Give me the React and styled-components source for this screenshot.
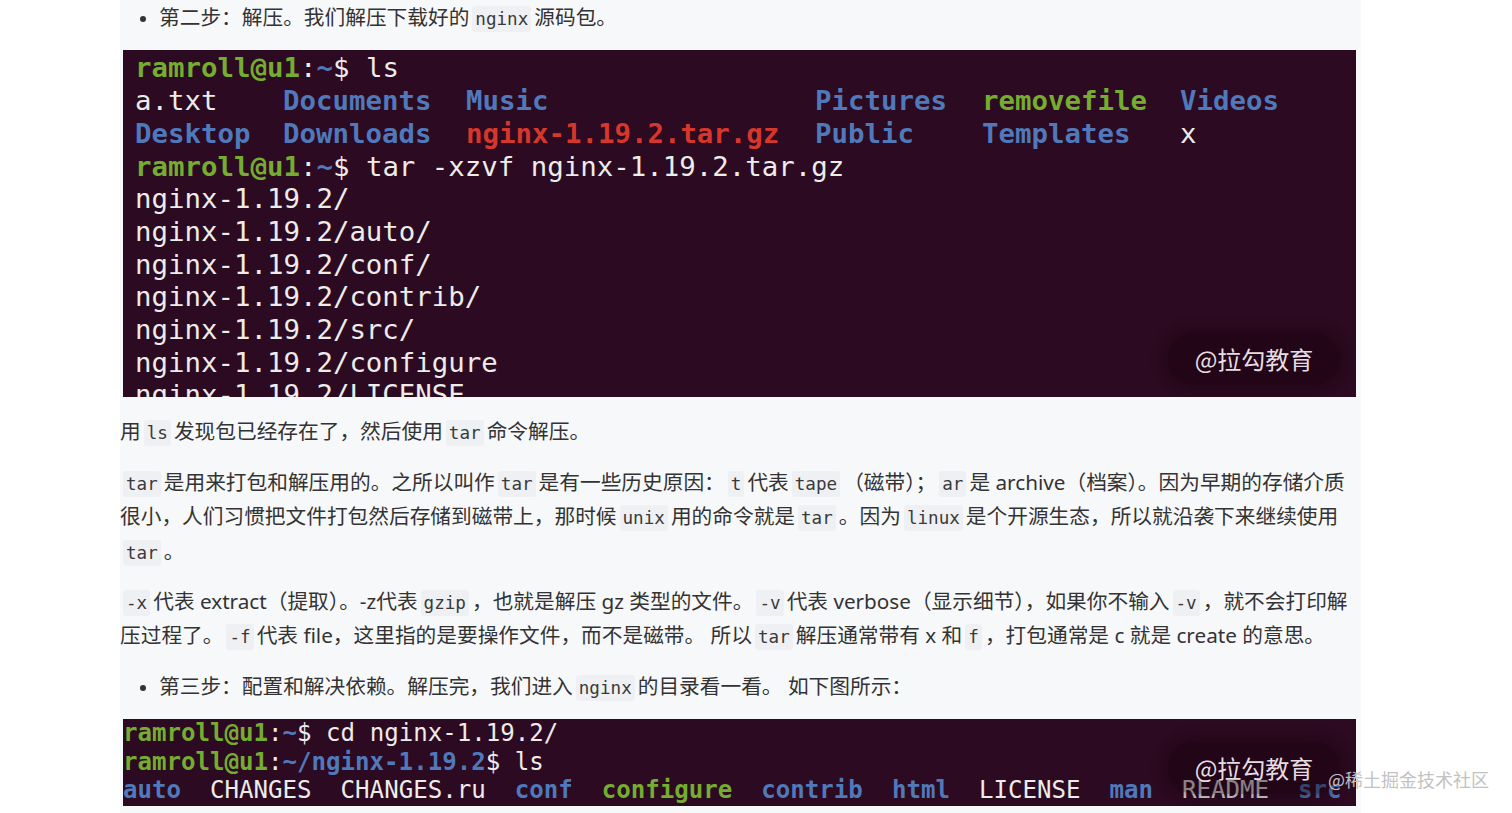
import React from "react";
import styled, { createGlobalStyle } from "styled-components";

const Global = createGlobalStyle`
  html, body { margin: 0; padding: 0; background: #ffffff; }
  body { font-family: "Noto Sans", "Noto Sans CJK SC", sans-serif; }
`;

const Page = styled.div`
  position: relative;
  width: 1512px;
  height: 813px;
  overflow: hidden;
  background: #ffffff;
`;

const Column = styled.article`
  margin-left: 120px;
  width: 1241px;
  height: 813px;
  background: #f7f8fa;
  color: #333333;
  font-family: "Noto Sans", "Noto Sans CJK SC", sans-serif;
  font-size: 20.7px;
  line-height: 34.4px;
  overflow: hidden;
`;

const List = styled.ul`
  margin: 0 0 16px 0;
  padding: 0 0 0 39px;
  list-style: disc;
  li::marker { font-size: 18px; }
`;

const Para = styled.p`
  margin: 0 0 16px 0;
`;

const Code = styled.code`
  font-family: "DejaVu Sans Mono", monospace;
  font-size: 17.6px;
  line-height: 1;
  background: #eef0f3;
  color: #3a3a3a;
  padding: 3px 3px;
  margin: 0 3px;
  border-radius: 3px;
`;

const Terminal = styled.div`
  position: relative;
  margin: 0 5px 17px 3px;
  height: ${(p) => p.$h}px;
  background: #2c0a21;
  overflow: hidden;
  font-family: "DejaVu Sans Mono", monospace;
  font-size: ${(p) => p.$fs}px;
  line-height: ${(p) => p.$lh}px;
  color: #ecece9;
  padding: ${(p) => p.$pad};
  box-sizing: border-box;
  white-space: pre;
`;

const Line = styled.div`
  white-space: pre;
`;

const Span = styled.span`
  color: ${(p) =>
    p.$c === "green" ? "#74ad2f" : p.$c === "blue" ? "#4f79bb" : p.$c === "red" ? "#d6372b" : "#ecece9"};
  font-weight: ${(p) => (p.$b ? 700 : 400)};
`;

const LsRow = styled.div`
  display: grid;
  grid-template-columns: 148px 183px 349px 167px 198px auto;
  white-space: pre;
`;

const Cursor = styled.span`
  display: inline-block;
  width: 13px;
  height: 26px;
  background: #ecece9;
  vertical-align: middle;
`;

const Badge = styled.div`
  position: absolute;
  right: 16px;
  bottom: 12px;
  width: 172px;
  height: 52px;
  border-radius: 26px;
  background: rgba(22, 3, 14, 0.45);
  box-shadow: 0 0 12px 6px rgba(22, 3, 14, 0.35);
  display: flex;
  align-items: center;
  justify-content: center;
  font-family: "Noto Sans CJK SC", sans-serif;
  font-size: 24px;
  color: #e6dde2;
  white-space: nowrap;
`;

const SiteMark = styled.div`
  position: absolute;
  left: 1328px;
  top: 766px;
  font-family: "Noto Sans CJK SC", sans-serif;
  font-size: 18px;
  line-height: 26px;
  color: #c2c2c2;
  white-space: nowrap;
`;

const Prompt = ({ path = "~" }) => (
  <>
    <Span $c="green" $b>ramroll@u1</Span>
    <Span>:</Span>
    <Span $c="blue" $b>{path}</Span>
    <Span>$ </Span>
  </>
);

export default function App() {
  return (
    <Page>
      <Global />
      <Column>
        <List>
          <li>
            第二步：解压。我们解压下载好的<Code>nginx</Code>源码包。
          </li>
        </List>

        <Terminal $h={347} $fs={27.4} $lh={32.7} $pad="2px 0 0 12px">
          <Line>
            <Prompt />ls
          </Line>
          <LsRow>
            <Span>a.txt</Span>
            <Span $c="blue" $b>Documents</Span>
            <Span $c="blue" $b>Music</Span>
            <Span $c="blue" $b>Pictures</Span>
            <Span $c="green" $b>removefile</Span>
            <Span $c="blue" $b>Videos</Span>
          </LsRow>
          <LsRow>
            <Span $c="blue" $b>Desktop</Span>
            <Span $c="blue" $b>Downloads</Span>
            <Span $c="red" $b>nginx-1.19.2.tar.gz</Span>
            <Span $c="blue" $b>Public</Span>
            <Span $c="blue" $b>Templates</Span>
            <Span>x</Span>
          </LsRow>
          <Line>
            <Prompt />tar -xzvf nginx-1.19.2.tar.gz
          </Line>
          <Line>nginx-1.19.2/</Line>
          <Line>nginx-1.19.2/auto/</Line>
          <Line>nginx-1.19.2/conf/</Line>
          <Line>nginx-1.19.2/contrib/</Line>
          <Line>nginx-1.19.2/src/</Line>
          <Line>nginx-1.19.2/configure</Line>
          <Line>nginx-1.19.2/LICENSE</Line>
          <Badge>@拉勾教育</Badge>
        </Terminal>

        <Para>
          用<Code>ls</Code>发现包已经存在了，然后使用<Code>tar</Code>命令解压。
        </Para>

        <Para>
          <Code>tar</Code>是用来打包和解压用的。之所以叫作<Code>tar</Code>是有一些历史原因：<Code>t</Code>代表<Code>tape</Code>（磁带）；<Code>ar</Code>是 archive（档案）。因为早期的存储介质很小，人们习惯把文件打包然后存储到磁带上，那时候<Code>unix</Code>用的命令就是<Code>tar</Code>。因为<Code>linux</Code>是个开源生态，所以就沿袭下来继续使用<Code>tar</Code>。
        </Para>

        <Para>
          <Code>-x</Code>代表 extract（提取）。-z代表<Code>gzip</Code>，也就是解压 gz 类型的文件。<Code>-v</Code>代表 verbose（显示细节），如果你不输入<Code>-v</Code>，就不会打印解压过程了。<Code>-f</Code>代表 file，这里指的是要操作文件，而不是磁带。 所以<Code>tar</Code>解压通常带有 x 和<Code>f</Code>，打包通常是 c 就是 create 的意思。
        </Para>

        <List>
          <li>
            第三步：配置和解决依赖。解压完，我们进入<Code>nginx</Code>的目录看一看。 如下图所示：
          </li>
        </List>

        <Terminal $h={87} $fs={24.1} $lh={28.5} $pad="0 0 0 0">
          <Line>
            <Prompt />cd nginx-1.19.2/
          </Line>
          <Line>
            <Prompt path="~/nginx-1.19.2" />ls
          </Line>
          <Line>
            <Span $c="blue" $b>auto</Span>{"  "}
            <Span>CHANGES</Span>{"  "}
            <Span>CHANGES.ru</Span>{"  "}
            <Span $c="blue" $b>conf</Span>{"  "}
            <Span $c="green" $b>configure</Span>{"  "}
            <Span $c="blue" $b>contrib</Span>{"  "}
            <Span $c="blue" $b>html</Span>{"  "}
            <Span>LICENSE</Span>{"  "}
            <Span $c="blue" $b>man</Span>{"  "}
            <Span>README</Span>{"  "}
            <Span $c="blue" $b>src</Span>
          </Line>
          <Line>
            <Prompt path="~/nginx-1.19.2" />
            <Cursor />
          </Line>
          <Badge>@拉勾教育</Badge>
        </Terminal>
      </Column>
      <SiteMark>@稀土掘金技术社区</SiteMark>
    </Page>
  );
}
